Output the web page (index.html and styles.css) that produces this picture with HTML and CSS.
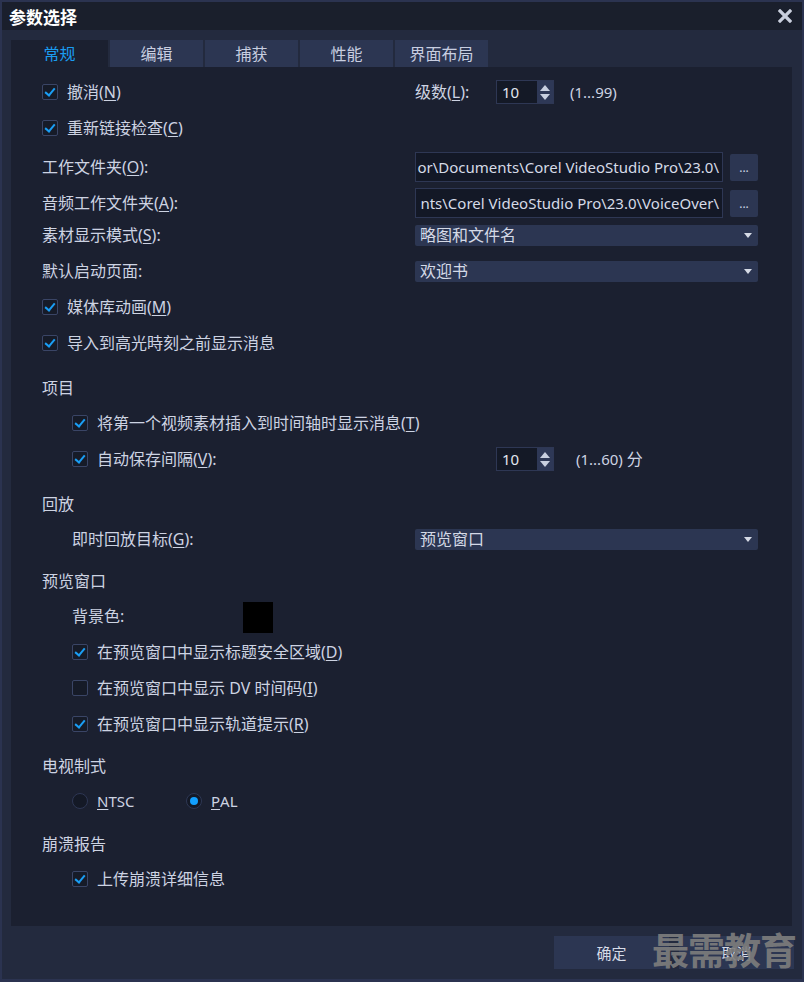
FILE: index.html
```html
<!DOCTYPE html>
<html lang="zh-CN">
<head>
<meta charset="UTF-8">
<title>参数选择</title>
<link rel="stylesheet" href="styles.css">
</head>
<body>
<div class="window">
  <div class="titlebar">
    <span class="title">参数选择</span>
    <svg class="close" width="14" height="14" viewBox="0 0 14 14"><path d="M2 2 L12 12 M12 2 L2 12" stroke="#c9cfdd" stroke-width="3.2" stroke-linecap="square"/></svg>
  </div>

  <div class="main">
    <div class="tabs">
      <div class="tab active">常规</div>
      <div class="tab">编辑</div>
      <div class="tab">捕获</div>
      <div class="tab">性能</div>
      <div class="tab">界面布局</div>
    </div>

    <div class="panel">
      <div class="row">
        <div class="lbl"><span class="cb on"></span>撤消(<u>N</u>)</div>
        <div class="sublbl">级数(<u>L</u>):</div>
        <div class="spin"><span class="spin-val">10</span><span class="spin-btn"><i class="up"></i><i class="down"></i></span></div>
        <span class="hint">(1...99)</span>
      </div>
      <div class="row">
        <div class="lbl"><span class="cb on"></span>重新链接检查(<u>C</u>)</div>
      </div>
      <div class="row field first-field">
        <div class="lbl">工作文件夹(<u>O</u>):</div>
        <div class="path">or\Documents\Corel VideoStudio Pro\23.0\</div>
        <div class="browse">...</div>
      </div>
      <div class="row field">
        <div class="lbl">音频工作文件夹(<u>A</u>):</div>
        <div class="path">nts\Corel VideoStudio Pro\23.0\VoiceOver\</div>
        <div class="browse">...</div>
      </div>
      <div class="row after-field">
        <div class="lbl">素材显示模式(<u>S</u>):</div>
        <div class="select">略图和文件名</div>
      </div>
      <div class="row">
        <div class="lbl">默认启动页面:</div>
        <div class="select">欢迎书</div>
      </div>
      <div class="row">
        <div class="lbl"><span class="cb on"></span>媒体库动画(<u>M</u>)</div>
      </div>
      <div class="row">
        <div class="lbl"><span class="cb on"></span>导入到高光時刻之前显示消息</div>
      </div>

      <div class="heading">项目</div>
      <div class="row indent">
        <div class="lbl"><span class="cb on"></span>将第一个视频素材插入到时间轴时显示消息(<u>T</u>)</div>
      </div>
      <div class="row indent">
        <div class="lbl wide"><span class="cb on"></span>自动保存间隔(<u>V</u>):</div>
        <div class="spin"><span class="spin-val">10</span><span class="spin-btn"><i class="up"></i><i class="down"></i></span></div>
        <span class="hint far">(1...60) <span class="cjk">分</span></span>
      </div>

      <div class="heading">回放</div>
      <div class="row indent">
        <div class="lbl">即时回放目标(<u>G</u>):</div>
        <div class="select">预览窗口</div>
      </div>

      <div class="heading tight">预览窗口</div>
      <div class="row indent">
        <div class="lbl short">背景色:</div>
        <div class="swatch"></div>
      </div>
      <div class="row indent">
        <div class="lbl"><span class="cb on"></span>在预览窗口中显示标题安全区域(<u>D</u>)</div>
      </div>
      <div class="row indent">
        <div class="lbl"><span class="cb"></span>在预览窗口中显示 DV 时间码(<u>I</u>)</div>
      </div>
      <div class="row indent">
        <div class="lbl"><span class="cb on"></span>在预览窗口中显示轨道提示(<u>R</u>)</div>
      </div>

      <div class="heading tight">电视制式</div>
      <div class="row indent">
        <div class="radio-opt"><span class="rb"></span><u>N</u>TSC</div>
        <div class="radio-opt"><span class="rb on"></span><u>P</u>AL</div>
      </div>

      <div class="heading mid">崩溃报告</div>
      <div class="row indent">
        <div class="lbl"><span class="cb on"></span>上传崩溃详细信息</div>
      </div>
    </div>

    <div class="footer">
      <div class="btn">确定</div>
      <div class="btn">取消</div>
    </div>
  </div>

  <div class="watermark">最需教育</div>
</div>
</body>
</html>
```

FILE: styles.css
```css
body { margin: 0; background: #2b3350; font-family: "Noto Sans", "Noto Sans CJK SC", sans-serif; font-size: 16px; color: #cdd3e2; }
.window { position: relative; width: 804px; height: 982px; box-sizing: border-box; border: 2px solid #2b3350; border-bottom-width: 3px; background: #232a3e; overflow: hidden; }

.titlebar { height: 28px; background: #1a1f2c; display: flex; align-items: center; justify-content: space-between; padding: 0 10px 0 7px; }
.title { color: #fff; font-size: 17px; font-weight: bold; font-family: "Noto Sans CJK SC", sans-serif; }
.close { display: block; }

.main { padding: 10px 10px 0 9px; }
.tabs { display: flex; gap: 2px; height: 27px; }
.tab { width: 93px; background: #2c3652; color: #c8cee0; display: flex; align-items: center; justify-content: center; font-size: 16px; line-height: 1; }
.tab.active { width: 97px; background: #1b2030; color: #1a9cf0; }

.panel { height: 859px; background: #1b2030; padding: 7px 0 0 31px; box-sizing: border-box; }
.row { display: flex; align-items: center; height: 36px; line-height: 1; white-space: nowrap; }
.row.first-field { margin-top: 3px; }
.row.after-field { margin-top: -4px; }
.row.indent { padding-left: 30px; }
.lbl { width: 373px; flex: none; display: flex; align-items: center; }
.indent .lbl { width: 343px; }
.indent .lbl.wide { width: 424px; }
.indent .lbl.short { width: 171px; }
u { text-decoration: underline; text-underline-offset: 2px; }

.heading { height: 34px; margin-top: 10px; display: flex; align-items: center; line-height: 1; }
.heading.tight { margin-top: 7px; }
.heading.mid { margin-top: 8px; }

.cb { width: 14px; height: 14px; border: 1px solid #3a4566; border-radius: 2px; background: #161b28; margin-right: 9px; flex: none; position: relative; }
.cb.on::after { content: ""; position: absolute; left: 4px; top: 1px; width: 4px; height: 8px; border: solid #1a9ef5; border-width: 0 2.5px 2.5px 0; transform: rotate(40deg); }

.sublbl { width: 81px; flex: none; }
.spin { display: flex; width: 58px; height: 24px; border: 1px solid #2e3754; box-sizing: border-box; flex: none; }
.spin-val { flex: 1; background: #141926; display: flex; align-items: center; padding-left: 5px; font-size: 15px; color: #e2e6ef; }
.spin-btn { width: 16px; background: #2e3856; display: flex; flex-direction: column; align-items: center; justify-content: center; gap: 3px; }
.spin-btn i { width: 0; height: 0; border-left: 5px solid transparent; border-right: 5px solid transparent; }
.spin-btn .up { border-bottom: 6px solid #c9d0e0; }
.spin-btn .down { border-top: 6px solid #c9d0e0; }
.hint { margin-left: 16px; font-size: 15px; }
.hint.far { margin-left: 22px; }
.hint .cjk { font-size: 16px; }

.path { width: 308px; height: 30px; box-sizing: border-box; background: #131826; border: 1px solid #2e3754; display: flex; align-items: center; justify-content: flex-end; padding-right: 3px; overflow: hidden; color: #d6dbe7; font-size: 15px; flex: none; }
.browse { width: 28px; height: 27px; margin-left: 7px; background: #2c3652; border-radius: 2px; display: flex; align-items: flex-end; justify-content: center; padding-bottom: 7px; box-sizing: border-box; font-size: 12px; flex: none; }

.select { width: 343px; height: 21px; box-sizing: border-box; background: #2c3652; border-radius: 2px; padding: 0 0 0 5px; display: flex; align-items: center; position: relative; color: #d4d9e6; flex: none; }
.select::after { content: ""; position: absolute; right: 6px; top: 8px; border-left: 4px solid transparent; border-right: 4px solid transparent; border-top: 5px solid #d6dbe6; }

.swatch { width: 30px; height: 31px; background: #000; margin-top: 3px; }

.radio-opt { display: flex; align-items: center; width: 114px; font-size: 15px; }
.rb { width: 14px; height: 14px; border: 1px solid #2e3754; border-radius: 50%; background: #141926; margin-right: 9px; position: relative; }
.rb.on::after { content: ""; position: absolute; left: 3px; top: 3px; width: 8px; height: 8px; border-radius: 50%; background: #12a0ff; }

.footer { display: flex; justify-content: flex-end; gap: 10px; padding-top: 10px; margin-right: -2px; }
.btn { width: 115px; height: 33px; background: #2c3652; display: flex; align-items: center; justify-content: center; font-size: 15px; color: #d6dbe7; }

.watermark { position: absolute; left: 650px; top: 920px; font-size: 37px; font-weight: bold; color: rgba(125, 125, 125, 0.92); font-family: "Noto Sans CJK SC", sans-serif; letter-spacing: -1px; }
```
